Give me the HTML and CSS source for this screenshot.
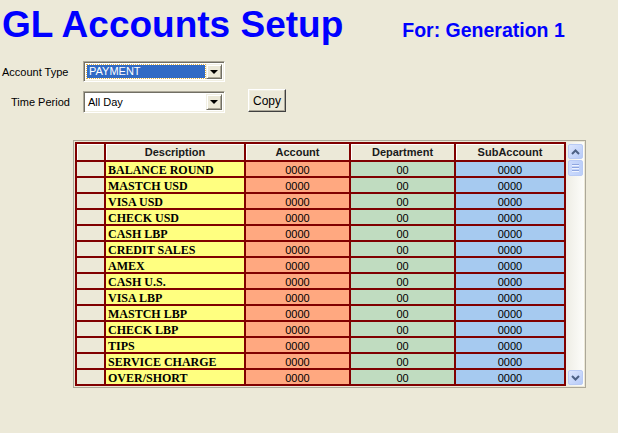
FILE: index.html
```html
<!DOCTYPE html>
<html>
<head>
<meta charset="utf-8">
<link rel="stylesheet" href="styles.css">
</head>
<body>
<header class="top">
  <h1 class="title">GL Accounts Setup</h1>
  <div class="for">For: Generation 1</div>
</header>
<section class="form">
  <label class="lbl lbl1">Account Type</label>
  <div class="combo c1">
    <div class="field"><span class="sel">PAYMENT</span></div>
    <div class="drop"><span class="tri"></span></div>
  </div>
  <div></div>
  <label class="lbl lbl2">Time Period</label>
  <div class="combo c2">
    <div class="field"><span class="val">All Day</span></div>
    <div class="drop"><span class="tri"></span></div>
  </div>
  <button class="btn">Copy</button>
</section>
<section class="frame">
  <div class="grid">
    <div class="hc rh"></div><div class="hc">Description</div><div class="hc">Account</div><div class="hc">Department</div><div class="hc">SubAccount</div>
    <div class="rh"></div><div class="d">BALANCE ROUND</div><div class="a">0000</div><div class="p">00</div><div class="s">0000</div>
    <div class="rh"></div><div class="d">MASTCH USD</div><div class="a">0000</div><div class="p">00</div><div class="s">0000</div>
    <div class="rh"></div><div class="d">VISA USD</div><div class="a">0000</div><div class="p">00</div><div class="s">0000</div>
    <div class="rh"></div><div class="d">CHECK USD</div><div class="a">0000</div><div class="p">00</div><div class="s">0000</div>
    <div class="rh"></div><div class="d">CASH LBP</div><div class="a">0000</div><div class="p">00</div><div class="s">0000</div>
    <div class="rh"></div><div class="d">CREDIT SALES</div><div class="a">0000</div><div class="p">00</div><div class="s">0000</div>
    <div class="rh"></div><div class="d">AMEX</div><div class="a">0000</div><div class="p">00</div><div class="s">0000</div>
    <div class="rh"></div><div class="d">CASH U.S.</div><div class="a">0000</div><div class="p">00</div><div class="s">0000</div>
    <div class="rh"></div><div class="d">VISA LBP</div><div class="a">0000</div><div class="p">00</div><div class="s">0000</div>
    <div class="rh"></div><div class="d">MASTCH LBP</div><div class="a">0000</div><div class="p">00</div><div class="s">0000</div>
    <div class="rh"></div><div class="d">CHECK LBP</div><div class="a">0000</div><div class="p">00</div><div class="s">0000</div>
    <div class="rh"></div><div class="d">TIPS</div><div class="a">0000</div><div class="p">00</div><div class="s">0000</div>
    <div class="rh"></div><div class="d">SERVICE CHARGE</div><div class="a">0000</div><div class="p">00</div><div class="s">0000</div>
    <div class="rh"></div><div class="d">OVER/SHORT</div><div class="a">0000</div><div class="p">00</div><div class="s">0000</div>
  </div>
  <div class="vscroll">
    <div class="sbtn up"><svg width="9" height="6" viewBox="0 0 9 6"><path d="M1 5 L4.5 1.5 L8 5" fill="none" stroke="#4d6185" stroke-width="2"/></svg></div>
    <div class="thumb"><i></i><i></i><i></i></div>
    <div class="track"></div>
    <div class="sbtn dn"><svg width="9" height="6" viewBox="0 0 9 6"><path d="M1 1 L4.5 4.5 L8 1" fill="none" stroke="#4d6185" stroke-width="2"/></svg></div>
  </div>
</section>
</body>
</html>
```
FILE: styles.css
```css
html, body {
  margin: 0;
  padding: 0;
  background: #ece9d8;
  width: 618px;
  height: 433px;
  overflow: hidden;
  font-family: "Liberation Sans", Arial, sans-serif;
}
.top {
  display: flex;
  align-items: baseline;
  height: 48px;
  padding-top: 6px;
  box-sizing: border-box;
}
.title {
  margin: 0 0 0 2px;
  font-size: 37px;
  line-height: 37px;
  font-weight: bold;
  color: #0000ff;
}
.for {
  margin-left: 59px;
  font-size: 19.5px;
  font-weight: bold;
  color: #0000ff;
}
.form {
  display: grid;
  grid-template-columns: 83px 142px auto;
  grid-template-rows: 21px 23px;
  row-gap: 8px;
  align-items: center;
  margin-top: 13px;
}
.lbl {
  font-size: 11px;
  color: #000;
}
.lbl1 { padding-left: 2px; }
.lbl2 { padding-left: 11px; }
.combo {
  display: flex;
  height: 21px;
  box-sizing: border-box;
  border-style: solid;
  border-width: 1px;
  border-color: #aca899 #fff #fff #aca899;
  background: #fff;
  box-shadow: inset 1px 1px 0 #716f64, inset -1px -1px 0 #f1efe2;
  padding: 2px 2px 2px 2px;
}
.c2 { height: 22px; }
.field {
  flex: 1;
  display: flex;
  align-items: center;
  font-size: 11px;
  padding-left: 1px;
}
.sel {
  flex: 1;
  background: #316ac5;
  color: #fff;
  outline: 1px dotted #e0b040;
  padding-left: 2px;
  line-height: 13px;
  margin-right: 1px;
}
.val { padding-left: 1px; color: #000; }
.drop {
  width: 16px;
  box-sizing: border-box;
  background: #ece9d8;
  border-style: solid;
  border-width: 1px;
  border-color: #f1efe2 #716f64 #716f64 #f1efe2;
  box-shadow: inset 1px 1px 0 #fff, inset -1px -1px 0 #aca899;
  display: flex;
  align-items: center;
  justify-content: center;
}
.tri {
  width: 0;
  height: 0;
  border-left: 4px solid transparent;
  border-right: 4px solid transparent;
  border-top: 4px solid #000;
  margin-top: 1px;
}
.btn {
  justify-self: start;
  margin-left: 23px;
  margin-top: -2px;
  width: 38px;
  height: 23px;
  padding: 0;
  font-family: "Liberation Sans", Arial, sans-serif;
  font-size: 12px;
  color: #000;
  background: #ece9d8;
  border-style: solid;
  border-width: 1px;
  border-color: #fff #404040 #404040 #fff;
  box-shadow: inset -1px -1px 0 #aca899, inset 1px 1px 0 #f1efe2;
}
.frame {
  display: flex;
  margin: 27px 0 0 73px;
  width: 513px;
  height: 248px;
  box-sizing: border-box;
  border: 1px solid #aca899;
  padding: 1px;
  background: #ece9d8;
}
.grid {
  display: grid;
  grid-template-columns: 27px 138px 103px 103px 108px;
  grid-template-rows: 16px;
  grid-auto-rows: 14px;
  gap: 2px;
  padding: 2px;
  background: #800000;
  align-self: start;
}
.grid > div {
  font-size: 11px;
  line-height: 14px;
  overflow: hidden;
  white-space: nowrap;
}
.hc {
  background: #ece9d8;
  font-weight: bold;
  text-align: center;
  color: #1a1a1a;
  line-height: 17px !important;
  box-shadow: inset 1px 1px 0 #fff;
}
.rh { background: #ece9d8; }
.d {
  background: #ffff80;
  font-family: "Liberation Serif", "Times New Roman", serif;
  font-weight: bold;
  font-size: 12px !important;
  line-height: 17px !important;
  padding-left: 2px;
  color: #000;
}
.a, .p, .s { text-align: center; color: #000; line-height: 16px !important; }
.a { background: #ffa880; }
.p { background: #c0dcc0; }
.s { background: #a6caf0; }
.vscroll {
  width: 18px;
  display: flex;
  flex-direction: column;
  align-items: center;
  background: linear-gradient(to right, #eeede5, #fdfdfa);
}
.sbtn {
  width: 15px;
  height: 15px;
  box-sizing: border-box;
  border: 1px solid #b9cbf5;
  border-radius: 2px;
  background: linear-gradient(135deg, #dce6fd, #b7cbf8);
  display: flex;
  align-items: center;
  justify-content: center;
}
.up { margin-top: 2px; }
.dn { margin-bottom: 1px; }
.thumb {
  margin-top: 1px;
  width: 15px;
  height: 16px;
  box-sizing: border-box;
  border: 1px solid #b9cbf5;
  border-radius: 2px;
  background: linear-gradient(to right, #cbdafc, #bccff9);
  display: flex;
  flex-direction: column;
  align-items: center;
  justify-content: center;
  gap: 1px;
}
.thumb i {
  display: block;
  width: 7px;
  height: 1px;
  background: #8fa6e0;
  border-bottom: 1px solid #eef3fe;
}
.track { flex: 1; }
```
